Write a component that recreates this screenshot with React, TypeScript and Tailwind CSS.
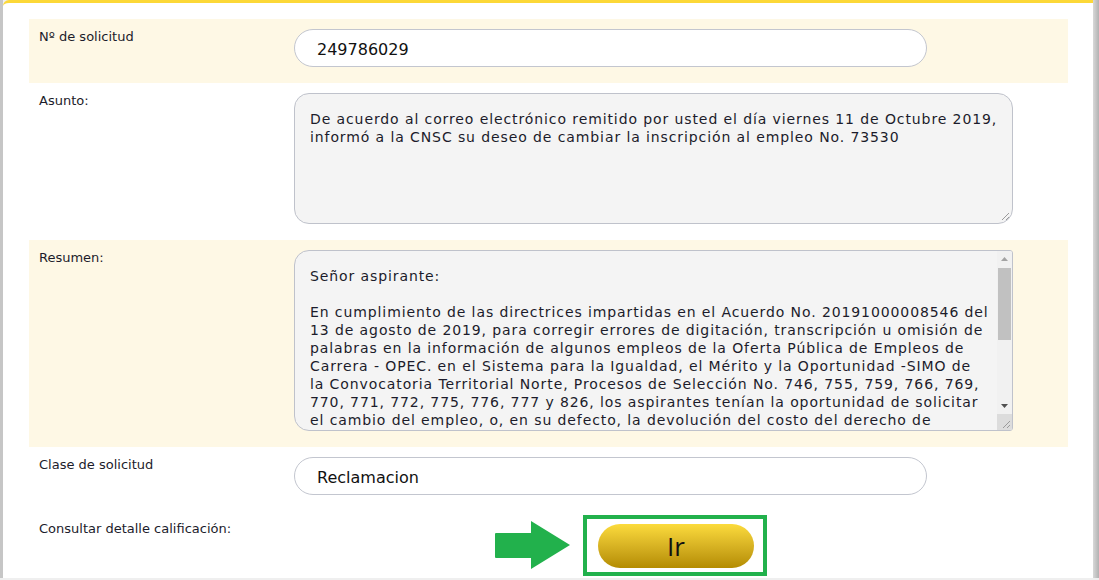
import React from 'react'

const labelCls = "text-[13px] leading-[16px] text-[#1c1c2b] font-['DejaVu_Sans',sans-serif]"
const areaText = "text-[14px] leading-[18px] tracking-[0.9px] text-[#1c1c2b] font-['DejaVu_Sans',sans-serif] whitespace-pre"

const asunto = [
  'De acuerdo al correo electrónico remitido por usted el día viernes 11 de Octubre 2019,',
  'informó a la CNSC su deseo de cambiar la inscripción al empleo No. 73530',
]

const resumen = [
  'Señor aspirante:',
  ' ',
  'En cumplimiento de las directrices impartidas en el Acuerdo No. 20191000008546 del',
  '13 de agosto de 2019, para corregir errores de digitación, transcripción u omisión de',
  'palabras en la información de algunos empleos de la Oferta Pública de Empleos de',
  'Carrera - OPEC. en el Sistema para la Igualdad, el Mérito y la Oportunidad -SIMO de',
  'la Convocatoria Territorial Norte, Procesos de Selección No. 746, 755, 759, 766, 769,',
  '770, 771, 772, 775, 776, 777 y 826, los aspirantes tenían la oportunidad de solicitar',
  'el cambio del empleo, o, en su defecto, la devolución del costo del derecho de',
]

// Row wrapper: label column + field column
const Row = ({ label, beige = false, children }: any) => (
  <div className={`grid grid-cols-[255px_1fr] px-[10px] pt-[10px] pb-[16px] ${beige ? 'bg-[#fef8e5]' : ''}`}>
    <div className={labelCls}>{label}</div>
    <div>{children}</div>
  </div>
)

const Pill = ({ value }: { value: string }) => (
  <div className="flex h-[38px] w-[633px] items-center rounded-full border border-[#c3c6cf] bg-white pl-[22px] pt-[3px] text-[16px] text-[#111] font-['DejaVu_Sans',sans-serif]">
    {value}
  </div>
)

const Grip = () => (
  <svg width="10" height="10" viewBox="0 0 10 10" className="block">
    <line x1="9" y1="2" x2="2" y2="9" stroke="#9a9a9a" strokeWidth="1" />
    <line x1="9" y1="6" x2="6" y2="9" stroke="#9a9a9a" strokeWidth="1" />
  </svg>
)

export default function App() {
  return (
    <div className="flex h-[580px] w-[1099px] overflow-hidden bg-[#efefef]">
      <div className="h-[578px] w-[3px] bg-[#c6c6c6]" />

      <div className="h-[578px] flex-1 rounded-tl-[6px] border-t-[3px] border-[#fcd838] bg-white pl-[26px] pr-[25px] pt-[16px]">
        {/* Nº de solicitud */}
        <Row label="Nº de solicitud" beige>
          <Pill value="249786029" />
        </Row>

        {/* Asunto */}
        <Row label="Asunto:">
          <div className="relative h-[131px] w-[719px] rounded-[15px] border border-[#bfc2cb] bg-[#f4f4f4] pl-[15px] pt-[16px]">
            {asunto.map((l, i) => (
              <div key={i} className={areaText}>{l}</div>
            ))}
            <div className="absolute bottom-[2px] right-[2px]">
              <Grip />
            </div>
          </div>
        </Row>

        {/* Resumen */}
        <Row label="Resumen:" beige>
          <div className="flex h-[181px] w-[719px] overflow-hidden rounded-l-[15px] rounded-r-[3px] border border-[#bfc2cb] bg-[#f4f4f4]">
            <div className="flex-1 overflow-hidden pl-[15px] pt-[16px]">
              {resumen.map((l, i) => (
                <div key={i} className={areaText}>{l}</div>
              ))}
            </div>
            <div className="flex w-[15px] flex-col bg-[#f1f1f1]">
              <div className="flex h-[16px] items-center justify-center">
                <svg width="7" height="4" viewBox="0 0 7 4"><path d="M0 4 L3.5 0 L7 4 Z" fill="#a3a3a3" /></svg>
              </div>
              <div className="mx-[1px] mt-[1px] h-[72px] bg-[#c1c1c1]" />
              <div className="flex-1" />
              <div className="flex h-[16px] items-center justify-center">
                <svg width="7" height="4" viewBox="0 0 7 4"><path d="M0 0 L7 0 L3.5 4 Z" fill="#505050" /></svg>
              </div>
              <div className="flex h-[16px] items-end justify-end bg-[#dcdcdc] pb-[1px] pr-[1px]">
                <Grip />
              </div>
            </div>
          </div>
        </Row>

        {/* Clase de solicitud */}
        <Row label="Clase de solicitud">
          <Pill value="Reclamacion" />
        </Row>

        {/* Consultar detalle */}
        <div className="grid grid-cols-[255px_1fr] px-[10px]">
          <div className={`${labelCls} pt-[10px]`}>Consultar detalle calificación:</div>
          <div className="flex items-center pl-[201px] pt-[4px]">
            <svg width="75" height="48" viewBox="0 0 75 48" className="mt-[-2px] block">
              <path d="M1 12 H36 V0 L75 24 L36 48 V37 H1 Q0 37 0 36 V13 Q0 12 1 12 Z" fill="#22b14c" />
            </svg>
            <div className="ml-[13px] h-[61px] w-[184px] border-[4px] border-[#22b14c] pl-[11px] pt-[5px]">
              <button className="flex h-[44px] w-[156px] items-center justify-center rounded-full bg-gradient-to-b from-[#fcdb3c] to-[#b48c00] text-[26px] text-[#111] font-['Open_Sans',sans-serif]">
                Ir
              </button>
            </div>
          </div>
        </div>
      </div>

      <div className="h-[578px] w-[6px] bg-gradient-to-r from-[#d8d8d8] to-[#b2b2b2]" />
    </div>
  )
}
